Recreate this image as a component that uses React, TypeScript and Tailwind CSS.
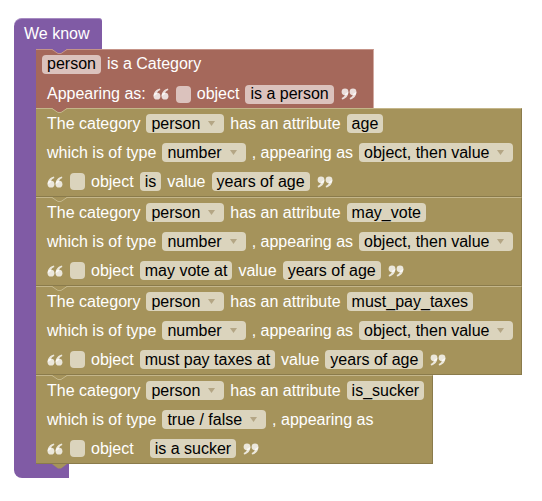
import React from 'react';

function Field({ children, arrow = false }: { children: React.ReactNode; arrow?: boolean }) {
  return (
    <span className="inline-flex items-center h-[19px] pl-[5px] pr-[5px] rounded-[4px] bg-white/60 text-black leading-none">
      {children}
      {arrow && (
        <svg width="7" height="5" viewBox="0 0 7 5" className="ml-[8px] mr-[4px]">
          <polygon points="0,0 7,0 3.5,5" fill="#b4a685" />
        </svg>
      )}
    </span>
  );
}

function Quote({ close = false }: { close?: boolean }) {
  return (
    <svg width="17" height="12" viewBox="0 0 17 12" className={close ? 'rotate-180' : ''}>
      {[0, 8].map((dx) => (
        <g key={dx} transform={`translate(${dx} 0)`} fill="#fff" fillOpacity="0.78">
          <circle cx="4" cy="8.2" r="3.4" />
          <path d="M0.6 8.2 C0.6 4 3 1.2 7 0.4 L7.3 2.1 C5.2 2.8 4.1 4.4 4 6 Z" />
        </g>
      ))}
    </svg>
  );
}

function Check() {
  return <span className="inline-block w-[15px] h-[17px] rounded-[4px] bg-white/60" />;
}

function Row({ children, tight = false }: { children: React.ReactNode; tight?: boolean }) {
  return (
    <div className={`flex-1 flex items-center gap-[6px] whitespace-nowrap ${tight ? 'pl-[6px] pb-[2px]' : 'pl-[11px]'}`}>
      {children}
    </div>
  );
}

function Notch({ fill, line }: { fill: string; line: string }) {
  return (
    <svg width="15" height="5" viewBox="0 0 15 5" className="absolute top-[-1px] left-[16px]">
      <polygon points="0,0 6,4.5 9,4.5 15,0" fill={fill} />
      <polyline points="0,0.5 6,4.5 9,4.5 15,0.5" fill="none" stroke={line} strokeWidth="1" />
    </svg>
  );
}

interface AttrProps {
  name: string;
  type: string;
  appearing?: string;
  verb: React.ReactNode;
  width: string;
  notchFill: string;
}

function AttrBlock({ name, type, appearing, verb, width, notchFill }: AttrProps) {
  return (
    <div className={`relative flex flex-col h-[89px] ${width} bg-[#a5935b] border-t border-t-[#c4b68a] border-r border-r-[#8a7b4b] border-b border-b-[#8a7b4b]`}>
      <Notch fill={notchFill} line="#c4b68a" />
      <Row>
        <span>The category</span>
        <Field arrow>person</Field>
        <span>has an attribute</span>
        <Field>{name}</Field>
      </Row>
      <Row>
        <span>which is of type</span>
        <Field arrow>{type}</Field>
        <span>, appearing as</span>
        {appearing && <Field arrow>{appearing}</Field>}
      </Row>
      <Row>
        <Quote />
        <Check />
        {verb}
      </Row>
    </div>
  );
}

export default function App() {
  return (
    <div className="w-[542px] h-[501px] bg-white pl-[14px] pt-[18px] text-white text-[16px] font-['Liberation_Sans',Arial,sans-serif]">
      <div className="w-[88px] h-[31px] bg-[#805ba5] rounded-tl-[8px] rounded-tr-[3px] flex items-center pl-[10px] border-t border-t-[#a68bc1]">
        We know
      </div>
      <div className="flex">
        <div className="w-[22px] bg-[#805ba5]" />
        <div className="flex flex-col">
          <div className="relative flex flex-col h-[59px] w-[338px] bg-[#a5685b] border-t border-t-[#c59388] border-r border-r-[#d2aaa1]">
            <Notch fill="#805ba5" line="#c59388" />
            <Row tight>
              <Field>person</Field>
              <span>is a Category</span>
            </Row>
            <Row>
              <span>Appearing as:</span>
              <span className="ml-[1px]"><Quote /></span>
              <Check />
              <span>object</span>
              <Field>is a person</Field>
              <Quote close />
            </Row>
          </div>
          <AttrBlock
            name="age"
            type="number"
            appearing="object, then value"
            width="w-[486px]"
            notchFill="#a5685b"
            verb={
              <>
                <span>object</span>
                <Field>is</Field>
                <span>value</span>
                <Field>years of age</Field>
                <Quote close />
              </>
            }
          />
          <AttrBlock
            name="may_vote"
            type="number"
            appearing="object, then value"
            width="w-[486px]"
            notchFill="#a5935b"
            verb={
              <>
                <span>object</span>
                <Field>may vote at</Field>
                <span>value</span>
                <Field>years of age</Field>
                <Quote close />
              </>
            }
          />
          <AttrBlock
            name="must_pay_taxes"
            type="number"
            appearing="object, then value"
            width="w-[486px]"
            notchFill="#a5935b"
            verb={
              <>
                <span>object</span>
                <Field>must pay taxes at</Field>
                <span>value</span>
                <Field>years of age</Field>
                <Quote close />
              </>
            }
          />
          <AttrBlock
            name="is_sucker"
            type="true / false"
            width="w-[397px]"
            notchFill="#a5935b"
            verb={
              <>
                <span>object</span>
                <span className="ml-[10px]">
                  <Field>is a sucker</Field>
                </span>
                <Quote close />
              </>
            }
          />
        </div>
      </div>
      <div className="relative w-[55px] h-[14px] bg-[#805ba5] rounded-bl-[8px]">
        <svg width="15" height="5" viewBox="0 0 15 5" className="absolute top-0 left-[38px]">
          <polygon points="0,0 6,4.5 9,4.5 15,0" fill="#a5935b" />
        </svg>
      </div>
    </div>
  );
}
